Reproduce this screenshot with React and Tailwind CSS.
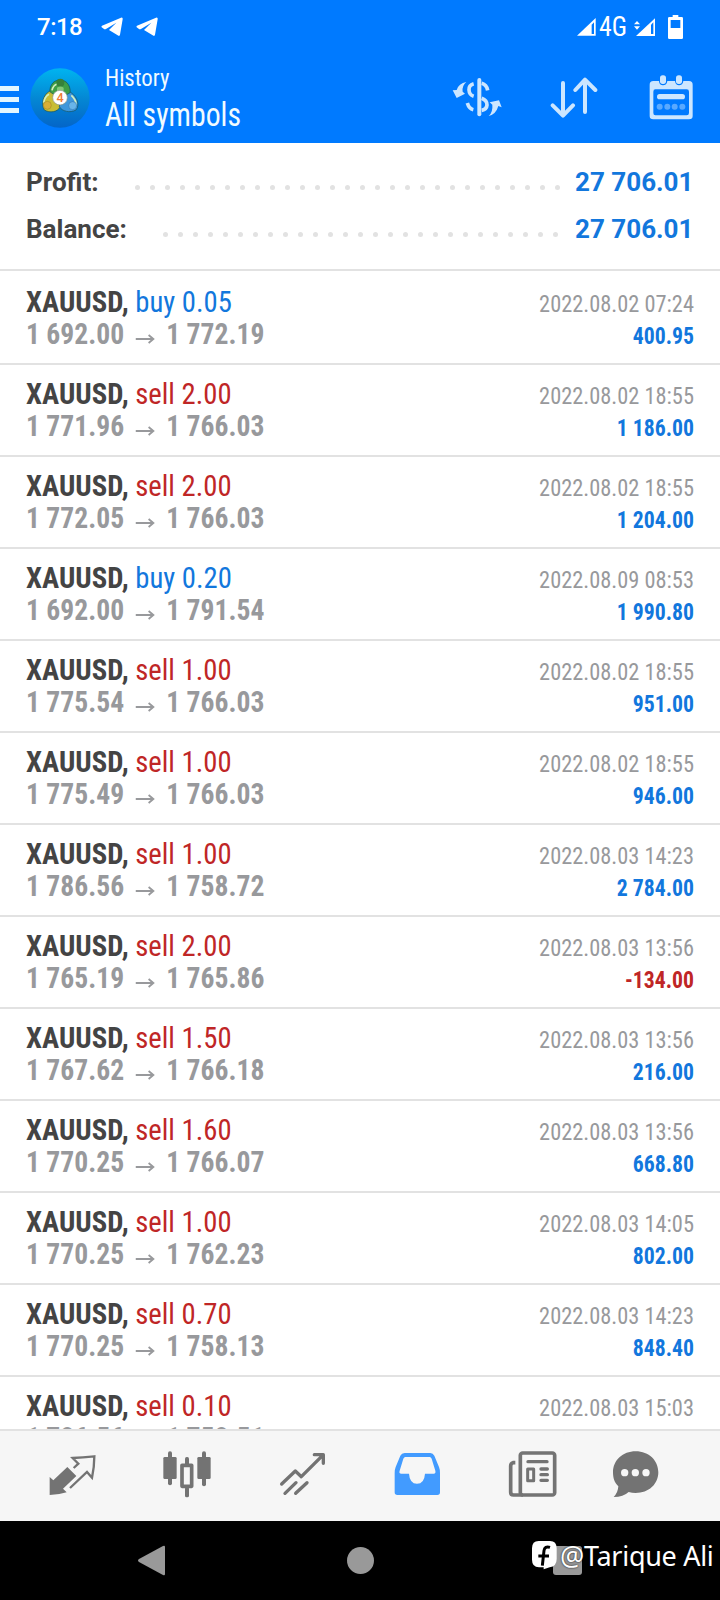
const CONDENSED = "[font-family:'Roboto_Condensed',Roboto,sans-serif]";

const deals = [
  { side: 'buy', lots: '0.05', open: '1 692.00', close: '1 772.19', time: '2022.08.02 07:24', profit: '400.95' },
  { side: 'sell', lots: '2.00', open: '1 771.96', close: '1 766.03', time: '2022.08.02 18:55', profit: '1 186.00' },
  { side: 'sell', lots: '2.00', open: '1 772.05', close: '1 766.03', time: '2022.08.02 18:55', profit: '1 204.00' },
  { side: 'buy', lots: '0.20', open: '1 692.00', close: '1 791.54', time: '2022.08.09 08:53', profit: '1 990.80' },
  { side: 'sell', lots: '1.00', open: '1 775.54', close: '1 766.03', time: '2022.08.02 18:55', profit: '951.00' },
  { side: 'sell', lots: '1.00', open: '1 775.49', close: '1 766.03', time: '2022.08.02 18:55', profit: '946.00' },
  { side: 'sell', lots: '1.00', open: '1 786.56', close: '1 758.72', time: '2022.08.03 14:23', profit: '2 784.00' },
  { side: 'sell', lots: '2.00', open: '1 765.19', close: '1 765.86', time: '2022.08.03 13:56', profit: '-134.00' },
  { side: 'sell', lots: '1.50', open: '1 767.62', close: '1 766.18', time: '2022.08.03 13:56', profit: '216.00' },
  { side: 'sell', lots: '1.60', open: '1 770.25', close: '1 766.07', time: '2022.08.03 13:56', profit: '668.80' },
  { side: 'sell', lots: '1.00', open: '1 770.25', close: '1 762.23', time: '2022.08.03 14:05', profit: '802.00' },
  { side: 'sell', lots: '0.70', open: '1 770.25', close: '1 758.13', time: '2022.08.03 14:23', profit: '848.40' },
  { side: 'sell', lots: '0.10', open: '1 786.56', close: '1 758.51', time: '2022.08.03 15:03', profit: '' }
];

const Telegram = () => (
  <svg className="w-[22px] h-[20px]" viewBox="304 52 66 60" fill="currentColor">
    <path d="M307 78 L364 54 Q370 52 369 59 L361 105 Q359 111 354 107 L328 91 L350 69 L319 88 Q315 90 312 87 L306 83 Q304 80 307 78 Z" />
  </svg>
);

const StatusBar = () => (
  <div className="flex h-[54px] items-center pl-[37px] pr-[37px] text-white">
    <span className="w-[64px] text-[24px] leading-none font-medium tracking-[-0.5px]">7:18</span>
    <div className="flex gap-[13px]">
      <Telegram />
      <Telegram />
    </div>
    <div className="ml-auto flex items-center">
      <svg className="w-[19px] h-[18px]" viewBox="0 0 57 54">
        <path d="M0 53 L56 0 V53 Z" fill="#fff" />
        <path d="M44 20 L51 13 V48 H44 Z" fill="#007aff" />
      </svg>
      <span className={`${CONDENSED} ml-[3px] w-[30px] origin-left scale-x-[0.92] text-[28px] leading-none`}>4G</span>
      <svg className="w-[22px] h-[18px] ml-[5px]" viewBox="642 53 66 54">
        <path d="M648 107 L705 54 V107 Z" fill="#fff" />
        <path d="M693 73 L700 66 V101 H693 Z" fill="#007aff" />
        <path d="M642 72 L651 62 L660 72 Z M642 78 L651 88 L660 78 Z" fill="#fff" />
      </svg>
      <svg className="w-[15px] h-[24px] ml-[12px]" viewBox="744 42 45 72">
        <path d="M758 42 H775 V48 H785 Q789 48 789 52 V110 Q789 114 785 114 H748 Q744 114 744 110 V52 Q744 48 748 48 H758 Z" fill="#fff" />
        <rect x="752" y="57" width="29" height="24" fill="#007aff" />
      </svg>
    </div>
  </div>
);

const AppLogo = () => (
  <svg className="w-[60px] h-[60px]" viewBox="90 204 180 180">
    <defs>
      <linearGradient id="logoSky" x1="0" y1="0" x2="0" y2="1">
        <stop offset="0" stopColor="#00b4f0" />
        <stop offset="0.5" stopColor="#0488d4" />
        <stop offset="1" stopColor="#0465c8" />
      </linearGradient>
    </defs>
    <circle cx="180" cy="294" r="89" fill="url(#logoSky)" />
    <g stroke="#14505a" strokeWidth="2">
      <path d="M180 240 C203 240 215 262 209 286 L180 293 L151 286 C145 262 157 240 180 240 Z" fill="#3f9f46" />
      <path d="M148 274 C130 284 122 312 133 330 C150 340 172 336 180 322 L178 295 Z" fill="#c8bd35" />
      <path d="M212 277 C232 290 240 315 228 330 C210 340 186 334 178 320 L182 295 Z" fill="#3e97dc" />
    </g>
    <path d="M156 271 Q160 255 172 252 M131 308 Q134 290 147 283 M214 286 Q229 300 228 314" fill="none" stroke="#d3efc0" strokeWidth="5" />
    <circle cx="181" cy="248" r="12" fill="#36813a" />
    <path d="M171 263 Q181 256 191 263 V274 H171 Z" fill="#83c978" />
    <circle cx="142" cy="316" r="12" fill="#d7ae35" stroke="#756a18" />
    <circle cx="218" cy="317" r="12" fill="#69b5e9" stroke="#17528b" />
    <circle cx="180" cy="293" r="22" fill="#fff" stroke="#87948b" strokeWidth="2" />
    <text x="180" y="307" textAnchor="middle" fontSize="38" fontWeight="500" fill="#f07b35">4</text>
  </svg>
);

const Header = () => (
  <div className="flex h-[89px] items-start text-white">
    <div className="mt-[32px] flex w-[19px] flex-col gap-[6px]">
      <div className="h-[5px] bg-[#e3f6ff]" />
      <div className="h-[5px] bg-[#e3f6ff]" />
      <div className="h-[5px] bg-[#e3f6ff]" />
    </div>
    <div className="mt-[14px] ml-[11px]">
      <AppLogo />
    </div>
    <div className={`${CONDENSED} ml-[15px] mt-[9px] text-[#f0fbff]`}>
      <div className="origin-left scale-x-[0.95] text-[24px] leading-[30px]">History</div>
      <div className="mt-[2px] origin-left scale-x-[0.915] text-[32.5px] leading-[40px]">All symbols</div>
    </div>
    <div className="ml-auto mr-[26px] mt-[18px] flex text-[#cce6ff]">
      {/* currency exchange */}
      <svg className="w-[54px] h-[54px]" viewBox="95 216 162 162" fill="none" stroke="currentColor" strokeWidth="10">
        <path d="M177 240 V343" strokeWidth="12" strokeLinecap="round" />
        <path d="M160 251 Q145 255 146 270 Q147 285 160 289 M184 250 Q199 254 202 271 M184 295 Q200 301 200 315 Q199 328 184 331 M141 309 Q146 326 159 329" strokeWidth="11" />
        <path d="M97 271 L109 270 Q115 250 138 246 Q124 258 127 275 L134 281 L109 294 Z M208 307 L236 301 L244 322 L234 318 Q227 343 205 348 Q218 337 216 314 Z" fill="currentColor" stroke="none" />
      </svg>
      <svg className="ml-[44px] w-[48px] h-[54px]" viewBox="390 216 144 162" fill="none" stroke="currentColor" strokeWidth="12" strokeLinecap="round" strokeLinejoin="round">
        <path d="M429 249 V346 M398 316 L429 347 L459 316 M495 336 V241 M466 270 L495 239 L526 270" />
      </svg>
      <svg className="ml-[50px] w-[46px] h-[54px]" viewBox="684 216 138 162">
        <path d="M700 243 H717 Q718 256 729 256 Q740 256 742 243 H765 Q767 256 777 256 Q788 256 790 243 H807 Q818 243 818 254 V348 Q818 358 807 358 H700 Q689 358 689 348 V254 Q689 243 700 243 Z M706 268 Q700 268 700 275 V339 Q700 346 706 346 H800 Q807 346 807 339 V275 Q807 268 800 268 Z" fill="currentColor" fillRule="evenodd" />
        <rect x="720" y="226" width="18" height="26" rx="8" fill="currentColor" />
        <rect x="768" y="226" width="18" height="26" rx="8" fill="currentColor" />
        <rect x="711" y="282" width="84" height="16" rx="8" fill="currentColor" />
        <g fill="#59a9ff">
          <circle cx="719" cy="320" r="9" />
          <circle cx="742" cy="320" r="9" />
          <circle cx="764" cy="320" r="9" />
          <circle cx="787" cy="320" r="9" />
        </g>
      </svg>
    </div>
  </div>
);

const Dots = ({ count }) => (
  <div className="ml-auto mt-[10px] flex gap-[10px]">
    {Array.from({ length: count }, (_, i) => (
      <div key={i} className="h-[5px] w-[5px] rounded-full bg-[#e2e2e2]" />
    ))}
  </div>
);

const Summary = () => (
  <div className="h-[128px] border-b-2 border-[#e2e2e2] pt-[16px] pl-[26px] pr-[28px] text-[26px] font-bold text-[#444]">
    <div className="flex h-[47px] items-center">
      <span>Profit:</span>
      <Dots count={29} />
      <span className="ml-[15px] w-[117px] whitespace-nowrap text-right text-[#1277dd]">27 706.01</span>
    </div>
    <div className="flex h-[47px] items-center">
      <span>Balance:</span>
      <Dots count={27} />
      <span className="ml-[17px] w-[117px] whitespace-nowrap text-right text-[#1277dd]">27 706.01</span>
    </div>
  </div>
);

const DealRow = ({ deal }) => (
  <div className={`${CONDENSED} flex h-[92px] shrink-0 justify-between border-b-2 border-[#e2e2e2] pl-[26px] pr-[26px]`}>
    <div className="pt-[13px] text-[29.5px] leading-[32px]">
      <div className="origin-left scale-x-[0.972] text-[#444]">
        <span className="font-bold">XAUUSD,</span>{' '}
        <span className={deal.side === 'buy' ? 'text-[#1277dd]' : 'text-[#bf2626]'}>
          {deal.side} {deal.lots}
        </span>
      </div>
      <div className="flex origin-left scale-x-[0.936] font-bold text-[#98999c]">
        <span>{deal.open}</span>
        <svg className="mx-[12px] mt-[15px] h-[12px] w-[21px]" viewBox="0 0 21 12" fill="none" stroke="currentColor" strokeWidth="2">
          <path d="M0 6 H19 M14 2 L19 6 L14 10" />
        </svg>
        <span>{deal.close}</span>
      </div>
    </div>
    <div className="pt-[15px] text-right text-[24px] leading-[32px]">
      <div className="origin-right scale-x-[0.933] text-[#98999c]">{deal.time}</div>
      <div className={`origin-right scale-x-[0.905] font-bold ${deal.profit.startsWith('-') ? 'text-[#bf2626]' : 'text-[#1277dd]'}`}>
        {deal.profit}
      </div>
    </div>
  </div>
);

const TabBar = () => (
  <div className="flex h-[92px] items-center border-t-2 border-[#e2e2e2] bg-[#f6f6f6] pl-[14px] text-[#737373]">
    {/* Quotes */}
    <div className="flex w-[115px] justify-center">
      <svg className="h-14 w-14" viewBox="133 234 168 168">
        <path d="M150 321 L161 331 L203 291 L230 318 L190 356 L201 367 Q176 375 150 375 Z" fill="currentColor" />
        <path d="M222 294 L236 281 L219 264 Q248 262 284 259 Q284 290 277 323 L262 306 L211 354" fill="none" stroke="currentColor" strokeWidth="7" />
      </svg>
    </div>
    {/* Charts */}
    <div className="flex w-[115px] justify-center">
      <svg className="h-14 w-14" viewBox="479 234 168 168" fill="currentColor">
        <rect x="492" y="261" width="40" height="66" rx="4" />
        <rect x="506" y="244" width="12" height="102" rx="6" />
        <rect x="594" y="261" width="40" height="66" rx="4" />
        <rect x="608" y="244" width="12" height="105" rx="6" />
        <rect x="557" y="261" width="12" height="25" rx="5" />
        <rect x="557" y="350" width="12" height="32" rx="5" />
        <rect x="548" y="286" width="29" height="63" fill="none" stroke="currentColor" strokeWidth="11" strokeLinejoin="round" />
      </svg>
    </div>
    {/* Trade */}
    <div className="flex w-[115px] justify-center">
      <svg className="h-14 w-14" viewBox="821 234 168 168" fill="none" stroke="currentColor" strokeWidth="10" strokeLinecap="round" strokeLinejoin="round">
        <path d="M844 342 L885 303 L903 320 L967 256 M942 254 H969 V280 M854 370 L887 338 M886 370 L920 338" />
      </svg>
    </div>
    {/* History */}
    <div className="flex w-[115px] justify-center">
      <svg className="h-14 w-14" viewBox="88 234 168 168">
        <path d="M135 249 H212 Q220 249 224 257 L238 291 Q241 298 241 309 V367 Q241 375 233 375 H113 Q105 375 105 367 V309 Q105 298 108 291 L122 257 Q126 249 135 249 Z" fill="#429bff" />
        <path d="M137 261 H210 Q214 261 216 266 L227 302 Q229 311 222 311 H196 Q194 341 172 341 Q150 341 148 311 H125 Q117 311 120 302 L131 266 Q133 261 137 261 Z" fill="#f6f6f6" />
      </svg>
    </div>
    {/* News */}
    <div className="flex w-[115px] justify-center">
      <svg className="h-14 w-14" viewBox="433 234 168 168" fill="none" stroke="currentColor" strokeWidth="11">
        <rect x="482" y="249" width="103" height="126" rx="7" />
        <path d="M467 278 H460 Q453 280 453 288 V367 Q453 375 461 375 H490" />
        <path d="M505 275 H562 M544 297 H563 M544 314 H563 M544 331 H563" strokeLinecap="round" strokeWidth="10" />
        <rect x="504" y="297" width="18" height="35" strokeWidth="9" strokeLinejoin="round" />
      </svg>
    </div>
    {/* Messages */}
    <div className="flex w-[92px] justify-center">
      <svg className="h-14 w-14" viewBox="743 234 168 168">
        <path d="M829 244 C869 244 897 272 897 307 C897 343 868 369 829 369 Q818 369 808 366 Q792 381 763 381 Q776 368 777 349 C765 338 761 324 761 307 C761 271 790 244 829 244 Z" fill="currentColor" />
        <g fill="#f6f6f6">
          <circle cx="796" cy="308" r="11" />
          <circle cx="828" cy="308" r="11" />
          <circle cx="860" cy="308" r="11" />
        </g>
      </svg>
    </div>
  </div>
);

const SystemNav = () => (
  <div className="relative flex h-[79px] bg-black pl-[138px] text-[#999]">
    <svg className="mt-[24px] h-[31px] w-[27px]" viewBox="0 0 27 31" fill="currentColor">
      <path d="M25 1 Q27 0 27 2 V29 Q27 31 25 30 L1 17 Q-1 15.500 1 14 Z" />
    </svg>
    <div className="ml-[182px] mt-[26px] h-[27px] w-[27px] rounded-full bg-[#999]" />
    <div className="ml-[179px] mt-[25px] h-[29px] w-[29px] rounded-[3px] bg-[#999]" />
    {/* Watermark sits over the recents button */}
    <div className="absolute left-[532px] top-[20px] flex items-center whitespace-nowrap text-white">
      <svg className="h-[29px] w-[25px]" viewBox="515 518 75 87">
        <path d="M535 518 H569 Q589 518 589 540 V572 Q589 594 568 597 L550 603 V597 H536 Q515 596 515 574 V540 Q515 518 535 518 Z" fill="#fff" />
        <path d="M569 537 Q553 532 551 547 L546 592 M534 563 H566" fill="none" stroke="#000" strokeWidth="9" />
      </svg>
      <span className="ml-[3px] text-[27px] leading-[29px] tracking-[-0.3px] [font-family:'Noto_Sans',sans-serif] [text-shadow:0_0_2px_#000]">@Tarique Ali</span>
    </div>
  </div>
);

const App = () => {
  return (
    <div className="flex h-[1600px] w-[720px] flex-col overflow-hidden bg-white [font-family:Roboto,sans-serif]">
      <div className="h-[143px] shrink-0 bg-[#007aff]">
        <StatusBar />
        <Header />
      </div>
      <Summary />
      <div className="flex h-[1158px] flex-col overflow-hidden pt-[2px]">
        {deals.map((deal, index) => (
          <DealRow key={index} deal={deal} />
        ))}
      </div>
      <TabBar />
      <SystemNav />
    </div>
  );
};

export default App;
